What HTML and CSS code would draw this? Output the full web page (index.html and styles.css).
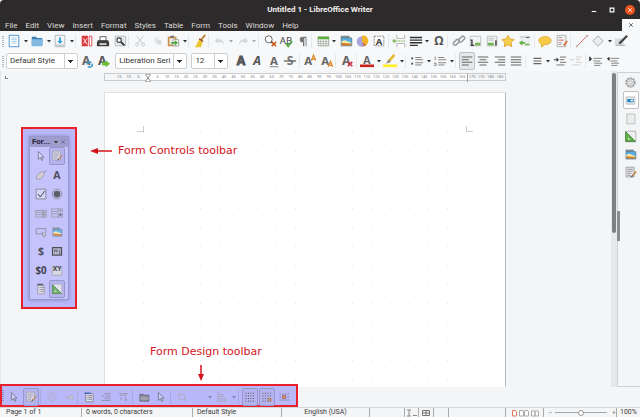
FILE: index.html
```
<!DOCTYPE html>
<html lang="en">
<head>
    <meta charset="UTF-8">
    <title>Untitled 1 - LibreOffice Writer</title>
    <link rel="stylesheet" href="styles.css">
</head>
<body>

<!-- icons -->
<svg class="sprite" aria-hidden="true">
    <symbol id="caret" viewBox="0 0 6 16"><path d="M1 7h4L3 9.500z" fill="#333"/></symbol>
    <symbol id="new" viewBox="0 0 16 16"><path d="M2.500 1.500h11v13h-11z" fill="#fff" stroke="#3b88cf"/><path d="M5 4.500h6M5 6.500h6M5 8.500h6M5 10.500h6" stroke="#9cc6ec"/></symbol>
    <symbol id="open" viewBox="0 0 16 16"><path d="M2 3h5l1 1.500h6V13H2z" fill="#3f7fb5"/><path d="M2 6h13l-1 8H2z" fill="#83b9e0"/></symbol>
    <symbol id="save" viewBox="0 0 16 16"><path d="M2.500 1.500h11v13h-11z" fill="#f4f6f8" stroke="#a9b2b8"/><path d="M7 4h2v4h2l-3 3-3-3h2z" fill="#1f9bd8"/><path d="M3 12h10v2H3z" fill="#c5cbd0"/></symbol>
    <symbol id="pdf" viewBox="0 0 16 16"><path d="M2 2h7v12H2z" fill="#d9363a"/><path d="M10.500 2.500h3v11h-3z" fill="#fff" stroke="#d9363a"/><path d="M4 11l4-6M4 5l4 7" stroke="#fff"/></symbol>
    <symbol id="print" viewBox="0 0 16 16"><path d="M4.500 3h7v5h-7z" fill="#fff" stroke="#555"/><path d="M2 7h12l1 3v4H1v-4z" fill="#3c3c3c"/><path d="M4 10.500h8v2H4z" fill="#ddd"/></symbol>
    <symbol id="preview" viewBox="0 0 16 16"><path d="M2.500 2.500h12v11h-12z" fill="#e6e8ea" stroke="#b5b8ba"/><circle cx="7" cy="7" r="2.500" fill="#fff" stroke="#444" stroke-width="1.300"/><path d="M9 9l4 4" stroke="#333" stroke-width="2"/></symbol>
    <symbol id="cut" viewBox="0 0 16 16"><g fill="none" stroke="#c3c5c8"><path d="M4 2l7 9M12 2l-7 9"/><circle cx="4.500" cy="12" r="1.700"/><circle cx="11.500" cy="12" r="1.700"/></g></symbol>
    <symbol id="copy" viewBox="0 0 16 16"><path d="M5 4h5v6H5z" fill="#e4e6e8"/><path d="M8 7h5v5H8z" fill="#d8dadd"/></symbol>
    <symbol id="paste" viewBox="0 0 16 16"><path d="M2 3h10v11H2z" fill="#c6944f"/><path d="M4 5h6v7H4z" fill="#eee"/><path d="M5 2h4v2H5z" fill="#666"/><path d="M8 6.500h6.500v7H8z" fill="#fff" stroke="#999"/><path d="M6 9h4V7l4 3-4 3v-2H6z" fill="#4da33c"/></symbol>
    <symbol id="brush" viewBox="0 0 16 16"><path d="M14 1l-5 6" stroke="#b98225" stroke-width="2"/><path d="M7 6l4 3-2 6H2c2-2 3-5 5-9z" fill="#e9c62e"/><path d="M7 5.500l4.500 3" stroke="#8c3a20" stroke-width="1.500"/></symbol>
    <symbol id="undo" viewBox="0 0 16 16"><path d="M6 4L2 8l4 3V9c3 0 5 0 6 3 1-4-2-6-6-6z" fill="#d7d9dc"/></symbol>
    <symbol id="redo" viewBox="0 0 16 16"><path d="M10 4l4 4-4 3V9c-3 0-5 0-6 3-1-4 2-6 6-6z" fill="#d7d9dc"/></symbol>
    <symbol id="find" viewBox="0 0 16 16"><circle cx="6.500" cy="6" r="4" fill="#fff" stroke="#555"/><path d="M9 9l2 2" stroke="#444" stroke-width="1.500"/><path d="M10 9l5 5M15 9l-5 5" stroke="#c9581c" stroke-width="1.800"/></symbol>
    <symbol id="para" viewBox="0 0 16 16"><path d="M12 3H7.500a3 3 0 0 0 0 6.500H8V14h1.500V4.500H11V14h1V3z" fill="#777"/></symbol>
    <symbol id="table" viewBox="0 0 16 16"><path d="M2.500 3.500h12v10h-12z" fill="#fff" stroke="#9aa39a"/><path d="M2 3h13v3H2z" fill="#5cae38"/><path d="M2 8.500h13M2 11h13M5.500 6v8M8.500 6v8M11.500 6v8" stroke="#a8b3a6"/></symbol>
    <symbol id="image" viewBox="0 0 16 16"><path d="M2 2h10v3H2z" fill="#7f8b93"/><path d="M2.500 4.500h12v9h-12z" fill="#55b0e6" stroke="#5f7f94"/><path d="M3 8l4-1 7 3v1H3z" fill="#f5e7a5"/><path d="M3 10l11 1v2H3z" fill="#d97e28"/></symbol>
    <symbol id="chart" viewBox="0 0 16 16"><circle cx="8" cy="8.500" r="6" fill="#aaa2da"/><path d="M8 2.500v6l5 4A6 6 0 0 0 8 2z" fill="#f4b326"/><path d="M9 9.500l4 4h-4z" fill="#d66a1e"/></symbol>
    <symbol id="pagebreak" viewBox="0 0 16 16"><path d="M5.500 1v4h9V1M5.500 15v-4h9v4" fill="#fff" stroke="#aaa"/><path d="M4 8h11" stroke="#6fae47" stroke-dasharray="2 1"/><circle cx="2.500" cy="8" r="2" fill="#84b75f"/></symbol>
    <symbol id="field" viewBox="0 0 16 16"><path d="M1 4h14M1 7h14M1 10h14M1 13h9" stroke="#333" stroke-width="1.500"/></symbol>
    <symbol id="link" viewBox="0 0 16 16"><g fill="none" stroke="#979b9e" stroke-width="1.800"><rect x="1" y="7.500" width="8" height="4" rx="2" transform="rotate(-45 5 9.500)"/><rect x="7" y="4" width="8" height="4" rx="2" transform="rotate(-45 11 6)"/></g></symbol>
    <symbol id="footnote" viewBox="0 0 16 16"><path d="M2.500 2.500h12v11h-12z" fill="#f2f3f4" stroke="#b8bbbd"/><path d="M3 7h1.500v6M3 13h4" fill="none" stroke="#333" stroke-width="1.500"/><path d="M8 10h6v3H8z" fill="#72b552"/></symbol>
    <symbol id="endnote" viewBox="0 0 16 16"><path d="M2.500 2.500h11v11h-11z" fill="#f2f3f4" stroke="#b8bbbd"/><path d="M4 5h6M4 7h6" stroke="#bbb"/><path d="M3 10h7v3H3z" fill="#72b552"/><path d="M12.500 7v6" stroke="#333" stroke-width="1.500"/></symbol>
    <symbol id="star" viewBox="0 0 16 16"><path d="M8 1.500l2 4.200 5 .6-3.600 3.300.9 4.900L8 12.200l-4.300 2.300.9-4.900L1 6.300l5-.6z" fill="#f8cf4b" stroke="#d9a52a"/></symbol>
    <symbol id="crossref" viewBox="0 0 16 16"><path d="M2 2h12v3H2z" fill="#d5d8da"/><path d="M4 5h10v9H4z" fill="#eceeef"/><path d="M1 10l4-3v2h3v2H5v2z" fill="#5dab40"/><path d="M8 11h5v2H8z" fill="#79ba5e"/><path d="M9 4h4" stroke="#555"/></symbol>
    <symbol id="comment" viewBox="0 0 16 16"><path d="M8 3c4 0 7 1.500 7 4.500S12 12 8 12l-4 3v-3.500C2 11 1 9 1 7.500 1 4.500 4 3 8 3z" fill="#f7cb45" stroke="#dda72d"/></symbol>
    <symbol id="track" viewBox="0 0 16 16"><path d="M2.500 1.500h10v13h-10z" fill="#f2f2f2" stroke="#a9abad"/><path d="M4 4h4M4 10h4M4 12h3" stroke="#999"/><path d="M4 7h6" stroke="#d05a4a"/><path d="M14 8l-4 5" stroke="#d8743a" stroke-width="2"/></symbol>
    <symbol id="line" viewBox="0 0 16 16"><path d="M2 14L14 2" stroke="#d0605c"/><path d="M1 13h2v2H1zM13 1h2v2h-2z" fill="#c9a5a5"/></symbol>
    <symbol id="shape" viewBox="0 0 16 16"><path d="M8 2l6 6-6 6-6-6z" fill="#e9ebec" stroke="#a2a5a7"/></symbol>
    <symbol id="draw" viewBox="0 0 16 16"><path d="M1 5h10v8H1z" fill="#d9dcde"/><path d="M2 13h11" stroke="#aaa"/><path d="M15 2L6 11" stroke="#444" stroke-width="2.500"/></symbol>

    <symbol id="bullets" viewBox="0 0 16 16"><path d="M6 4h7M6 6.500h9M6 10h9M6 12.500h7" stroke="#777"/><circle cx="2.500" cy="5" r="1.200" fill="#555"/><circle cx="2.500" cy="11" r="1.200" fill="#555"/></symbol>
    <symbol id="numbers" viewBox="0 0 16 16"><path d="M6 4h7M6 6.500h9M6 10h9M6 12.500h7" stroke="#777"/><path d="M2.500 3v4M1 10.500h2.500V13H1" fill="none" stroke="#777"/></symbol>
    <symbol id="left" viewBox="0 0 16 16"><path d="M2 3.500h12M2 6.500h8M2 9.500h12M2 12.500h8" stroke="#666" stroke-width="1.200"/></symbol>
    <symbol id="center" viewBox="0 0 16 16"><path d="M2 3.500h12M4 6.500h8M2 9.500h12M4 12.500h8" stroke="#666" stroke-width="1.200"/></symbol>
    <symbol id="right" viewBox="0 0 16 16"><path d="M2 3.500h12M6 6.500h8M2 9.500h12M6 12.500h8" stroke="#666" stroke-width="1.200"/></symbol>
    <symbol id="justify" viewBox="0 0 16 16"><path d="M2 3.500h12M2 6.500h12M2 9.500h12M2 12.500h12" stroke="#666" stroke-width="1.200"/></symbol>
    <symbol id="spacing" viewBox="0 0 16 16"><path d="M4 5h9M4 8h9M4 11h9" stroke="#666" stroke-width="1.200"/></symbol>
    <symbol id="indent" viewBox="0 0 16 16"><path d="M8 3.500h7M8 6.500h5M8 9.500h7M4 12.500h9" stroke="#666"/><path d="M1 6h3V4l3 2.500L4 9V7H1z" fill="#444"/></symbol>
    <symbol id="outdent" viewBox="0 0 16 16"><path d="M8 3.500h7M8 6.500h5M8 9.500h7M4 12.500h9M1 6.500h5" stroke="#ccc"/></symbol>
    <symbol id="para-more" viewBox="0 0 16 16"><path d="M5 5h10M5 8h8M6 10.500h9M6 13h7" stroke="#777"/><path d="M1 3v5M3 5l-2 2" stroke="#222" stroke-width="1.500"/></symbol>
    <symbol id="para-less" viewBox="0 0 16 16"><path d="M5 5h10M5 8h8M6 10.500h9M6 13h7" stroke="#777"/><path d="M4 3v5L1 5.500z" fill="#222"/></symbol>

    <symbol id="arrow" viewBox="0 0 16 16"><path d="M4.500 2v10.500l2.500-2.500 2 4 1.600-.8-2-3.700H12z" fill="#fff" fill-opacity=".4" stroke="#555"/></symbol>
    <symbol id="design" viewBox="0 0 16 16"><path d="M2.500 1.500h10v12h-10z" fill="#e9e9ee" stroke="#999"/><path d="M4 4h7M4 6.500h7M4 9h5M4 11.500h4" stroke="#888"/><path d="M15 7l-5 5" stroke="#c28748" stroke-width="2"/><path d="M10 11l-2 3 3-1z" fill="#444"/></symbol>
    <symbol id="tag" viewBox="0 0 16 16"><path d="M9 3l4 4-6 7-5-1V9z" fill="#d9cfd0" stroke="#8c8591"/><path d="M11 5l4-3" stroke="#666"/></symbol>
    <symbol id="check" viewBox="0 0 16 16"><path d="M1.500 1.500h13v13h-13z" fill="#fff" fill-opacity=".4" stroke="#666"/><path d="M4 8l3 4 6-8" fill="none" stroke="#222" stroke-width="1.300"/></symbol>
    <symbol id="radio" viewBox="0 0 16 16"><circle cx="8" cy="8" r="6.500" fill="none" stroke="#777"/><circle cx="8" cy="8" r="4.500" fill="#444"/></symbol>
    <symbol id="listbox" viewBox="0 0 16 16"><path d="M1 4.500h14v9H1zM10 4.500v9M2 7h7M2 10h7" fill="none" stroke="#888"/><path d="M11 6.500h2.500v2H11zM11 10h2.500v2H11z" fill="none" stroke="#888"/></symbol>
    <symbol id="combo" viewBox="0 0 16 16"><path d="M1 2.500h14v11H1zM9.500 2v12M2 6h7M2 9h7" fill="none" stroke="#888"/><path d="M11 4h3l-1.500 2zM11 8.500h3v3h-3z" fill="#555"/></symbol>
    <symbol id="pushbtn" viewBox="0 0 16 16"><path d="M10 10.500H1.500v-7h13v6" fill="none" stroke="#777"/><path d="M10 8v5h2v2l3-3-3-2z" fill="#ddd" stroke="#777"/></symbol>
    <symbol id="date" viewBox="0 0 16 16"><path d="M2 3.500h12v10H2z" fill="#b5b5c5" stroke="#333" stroke-width="1.600"/><path d="M4 7h5M5 7v3M8 7v3M11.500 7v5" stroke="#333"/></symbol>
    <symbol id="more" viewBox="0 0 16 16"><path d="M3.500 3.500h9v11h-9z" fill="#e4e4ea" stroke="#888"/><path d="M3 2h8" stroke="#444" stroke-width="2"/><path d="M5 6h1M7 6h5M5 8.500h1M7 8.500h5M5 11h1M7 11h5" stroke="#777"/></symbol>
    <symbol id="wizard" viewBox="0 0 16 16"><path d="M2.500 1.500h12v13h-12z" fill="#eee" stroke="#aaa"/><path d="M2 2v12h12z" fill="#62b04b" stroke="#3b7d34"/><path d="M5 9v3h3z" fill="#d5e6d0"/></symbol>

    <symbol id="ring" viewBox="0 0 16 16"><circle cx="8" cy="8" r="5.500" fill="none" stroke="#aaa"/><circle cx="8" cy="8" r="2.500" fill="none" stroke="#aaa"/></symbol>
    <symbol id="form-off" viewBox="0 0 16 16"><path d="M3 7h4M3 10h4" stroke="#aaa"/><path d="M8.500 6.500h5v4h-5z" fill="#ccc" stroke="#aaa"/></symbol>
    <symbol id="navigator" viewBox="0 0 16 16"><path d="M3.500 3.500h10v11h-10z" fill="#e8e8f0" stroke="#666"/><path d="M2 2h8v2H2z" fill="#235a9b"/><path d="M5 6h1M7 6h5M5 8.500h1M7 8.500h5M5 11h1M7 11h5" stroke="#555"/></symbol>
    <symbol id="addfield" viewBox="0 0 16 16"><path d="M6 3.500h8M2 6.500h4M8 6.500h6M6 9.500h8M2 12.500h12" stroke="#777"/></symbol>
    <symbol id="order" viewBox="0 0 16 16"><path d="M2 3.500h13M4 5.500h6M11.500 4v9l-2-2M11.500 13l2-2M5.500 8v4" fill="none" stroke="#888"/></symbol>
    <symbol id="folder" viewBox="0 0 16 16"><path d="M2.500 4.500h5l1 1h6v8h-12z" fill="#777" stroke="#444"/><path d="M3 7.500h11v5H3z" fill="#9a9a9a"/></symbol>
    <symbol id="crop" viewBox="0 0 16 16"><path d="M4.500 2v9.500H14M2 4.500h9.500V14" fill="none" stroke="#aaa"/></symbol>
    <symbol id="align" viewBox="0 0 16 16"><path d="M2.500 1v14M3 4.500h6v3H3M3 10.500h10v3H3" fill="none" stroke="#999"/></symbol>
    <symbol id="dots" viewBox="0 0 16 16"><path d="M2 3h13M2 6.500h13M2 10h13M2 13.500h13" stroke="#333" stroke-width="1.300" stroke-dasharray="1.300 2"/></symbol>
    <symbol id="snap" viewBox="0 0 16 16"><path d="M2 3h13M2 6.500h13M2 10h13M2 13.500h13" stroke="#444" stroke-width="1.300" stroke-dasharray="1.300 2"/><path d="M9 9h5v5H9z" fill="#b98357"/></symbol>
    <symbol id="guides" viewBox="0 0 16 16"><path d="M2 4h13M2 8h13M2 12h13" stroke="#555" stroke-dasharray="2 1.500"/><path d="M5.500 5.500h5v5h-5z" fill="#b5532c"/><path d="M7 7h2v2H7z" fill="#f3c54a"/></symbol>

    <symbol id="gear" viewBox="0 0 16 16"><circle cx="8" cy="8" r="5.500" fill="none" stroke="#a3a6a8" stroke-width="2" stroke-dasharray="2.500 1"/><circle cx="8" cy="8" r="4.500" fill="#eee" stroke="#999"/><circle cx="8" cy="8" r="2" fill="#fff" stroke="#999"/></symbol>
    <symbol id="toggle" viewBox="0 0 16 16"><path d="M2.500 3.500h11v9h-11z" fill="#e5e8ea" stroke="#b6babd"/><rect x="4" y="6" width="8" height="4" rx="1" fill="#2382c4"/><path d="M8 7h3v2H8z" fill="#fff"/></symbol>
    <symbol id="page" viewBox="0 0 16 16"><path d="M3.500 2.500h10v12h-10z" fill="#eceeee" stroke="#b3b5b6"/></symbol>
    <symbol id="minus" viewBox="0 0 16 16"><path d="M2 12h12" stroke="#fff" stroke-width="3"/></symbol>
    <symbol id="max" viewBox="0 0 16 16"><path d="M3 3h10v10H3z" fill="none" stroke="#fff" stroke-width="3"/></symbol>
    <symbol id="x" viewBox="0 0 16 16"><path d="M3 3l10 10M13 3L3 13" stroke="currentColor" stroke-width="2"/></symbol>
    <symbol id="hourglass" viewBox="0 0 6 8"><path d="M1 0h4v1.500L3 4l2 2.500V8H1V6.500L3 4 1 1.500z" fill="#fff" stroke="#888"/></symbol>
</svg>

<header class="titlebar">
    <h1>Untitled 1 - LibreOffice Writer</h1>
    <div class="window-btns">
        <button aria-label="Minimize"><svg><use href="#minus"/></svg></button>
        <button aria-label="Maximize"><svg><use href="#max"/></svg></button>
        <button class="close" aria-label="Close"><svg><use href="#x"/></svg></button>
    </div>
    <nav class="menu">
        <button>File</button>
        <button>Edit</button>
        <button>View</button>
        <button>Insert</button>
        <button>Format</button>
        <button>Styles</button>
        <button>Table</button>
        <button>Form</button>
        <button>Tools</button>
        <button>Window</button>
        <button>Help</button>
        <button class="close-doc" aria-label="Close document"><svg><use href="#x"/></svg></button>
    </nav>
</header>

<div class="toolbar standard">
    <button class="tool" aria-label="New"><svg><use href="#new"/></svg></button>
    <button class="drop" aria-label="New menu"><svg><use href="#caret"/></svg></button>
    <button class="tool" aria-label="Open"><svg><use href="#open"/></svg></button>
    <button class="drop" aria-label="Open menu"><svg><use href="#caret"/></svg></button>
    <button class="tool" aria-label="Save"><svg><use href="#save"/></svg></button>
    <button class="drop" aria-label="Save menu"><svg><use href="#caret"/></svg></button>
    <i class="sep"></i>
    <button class="tool" aria-label="Export as PDF"><svg><use href="#pdf"/></svg></button>
    <button class="tool" aria-label="Print"><svg><use href="#print"/></svg></button>
    <button class="tool" aria-label="Print preview"><svg><use href="#preview"/></svg></button>
    <i class="sep"></i>
    <button class="tool" aria-label="Cut"><svg><use href="#cut"/></svg></button>
    <button class="tool" aria-label="Copy"><svg><use href="#copy"/></svg></button>
    <button class="tool" aria-label="Paste"><svg><use href="#paste"/></svg></button>
    <button class="drop" aria-label="Paste menu"><svg><use href="#caret"/></svg></button>
    <i class="sep"></i>
    <button class="tool" aria-label="Clone formatting"><svg><use href="#brush"/></svg></button>
    <i class="sep"></i>
    <button class="tool" aria-label="Undo"><svg><use href="#undo"/></svg></button>
    <button class="drop off" aria-label="Undo menu"><svg><use href="#caret"/></svg></button>
    <button class="tool" aria-label="Redo"><svg><use href="#redo"/></svg></button>
    <button class="drop off" aria-label="Redo menu"><svg><use href="#caret"/></svg></button>
    <i class="sep"></i>
    <button class="tool" aria-label="Find and replace"><svg><use href="#find"/></svg></button>
    <button class="tool" aria-label="Spelling"><svg viewBox="0 0 16 16"><text x="8" y="11" text-anchor="middle" font-size="11" fill="#444">AB</text><path d="M8 11l2.500 3L15 8" fill="none" stroke="#4fa83d" stroke-width="2"/></svg></button>
    <button class="tool" aria-label="Formatting marks"><svg><use href="#para"/></svg></button>
    <i class="sep"></i>
    <button class="tool" aria-label="Table"><svg><use href="#table"/></svg></button>
    <button class="drop" aria-label="Table menu"><svg><use href="#caret"/></svg></button>
    <button class="tool" aria-label="Image"><svg><use href="#image"/></svg></button>
    <button class="tool" aria-label="Chart"><svg><use href="#chart"/></svg></button>
    <button class="tool" aria-label="Text box"><svg viewBox="0 0 16 16"><path d="M2.500 2.500h11v11h-11z" fill="#fff" stroke="#777" stroke-dasharray="2 1"/><text x="8" y="12" text-anchor="middle" font-size="11" font-weight="700" fill="#444">A</text></svg></button>
    <i class="sep"></i>
    <button class="tool" aria-label="Page break"><svg><use href="#pagebreak"/></svg></button>
    <button class="tool" aria-label="Field"><svg><use href="#field"/></svg></button>
    <button class="drop" aria-label="Field menu"><svg><use href="#caret"/></svg></button>
    <button class="tool" aria-label="Special character"><svg viewBox="0 0 16 16"><text x="8" y="13" text-anchor="middle" font-size="14" font-weight="700" fill="#555">Ω</text></svg></button>
    <i class="sep"></i>
    <button class="tool" aria-label="Hyperlink"><svg><use href="#link"/></svg></button>
    <button class="tool" aria-label="Footnote"><svg><use href="#footnote"/></svg></button>
    <button class="tool" aria-label="Endnote"><svg><use href="#endnote"/></svg></button>
    <button class="tool" aria-label="Bookmark"><svg><use href="#star"/></svg></button>
    <button class="tool" aria-label="Cross-reference"><svg><use href="#crossref"/></svg></button>
    <i class="sep"></i>
    <button class="tool" aria-label="Comment"><svg><use href="#comment"/></svg></button>
    <button class="tool" aria-label="Track changes"><svg><use href="#track"/></svg></button>
    <i class="sep"></i>
    <button class="tool" aria-label="Line"><svg><use href="#line"/></svg></button>
    <button class="tool" aria-label="Shapes"><svg><use href="#shape"/></svg></button>
    <button class="drop" aria-label="Shapes menu"><svg><use href="#caret"/></svg></button>
    <button class="tool" aria-label="Draw functions"><svg><use href="#draw"/></svg></button>
</div>

<div class="toolbar formatting">
    <select class="wide" aria-label="Paragraph style"><option>Default Style</option></select>
    <button class="tool" aria-label="Update style"><svg viewBox="0 0 16 16"><text x="7" y="13" text-anchor="middle" font-size="14" font-weight="700" fill="#666">A</text><path d="M8 12a3 3 0 0 1 5-2M14 11a3 3 0 0 1-5 3" fill="none" stroke="#3e9bc4" stroke-width="1.800"/></svg></button>
    <button class="tool" aria-label="New style"><svg viewBox="0 0 16 16"><text x="7" y="13" text-anchor="middle" font-size="14" font-weight="700" fill="#555">A</text><path d="M7 9h4V7l5 4-5 4v-2H7z" fill="#6bbd35"/></svg></button>
    <i class="sep blank"></i>
    <select class="wide" aria-label="Font name"><option>Liberation Seri</option></select>
    <i class="sep blank"></i>
    <select class="narrow" aria-label="Font size"><option>12</option></select>
    <i class="sep blank"></i>
    <button class="tool" aria-label="Bold"><svg viewBox="0 0 16 16"><text x="8" y="13" text-anchor="middle" font-size="14" font-weight="700" fill="#555" stroke="#555">A</text></svg></button>
    <button class="tool" aria-label="Italic"><svg viewBox="0 0 16 16"><text x="8" y="13" text-anchor="middle" font-size="14" font-weight="700" font-style="italic" fill="#555">A</text></svg></button>
    <button class="tool" aria-label="Underline"><svg viewBox="0 0 16 16"><text x="8" y="12" text-anchor="middle" font-size="13" font-weight="700" fill="#666">A</text><path d="M3 14.500h10" stroke="#777"/></svg></button>
    <button class="tool" aria-label="Strikethrough"><svg viewBox="0 0 16 16"><text x="8" y="13" text-anchor="middle" font-size="14" font-weight="700" fill="#777">S</text><path d="M1 8h14" stroke="#666" stroke-width="1.500"/></svg></button>
    <i class="sep"></i>
    <button class="tool" aria-label="Superscript"><svg viewBox="0 0 16 16"><text x="6" y="13" text-anchor="middle" font-size="13" font-weight="700" fill="#666">A</text><path d="M9.500 7.500l2.500-6 2.500 6M10.500 6h3" fill="none" stroke="#e08a2c" stroke-width="1.500"/></svg></button>
    <button class="tool" aria-label="Subscript"><svg viewBox="0 0 16 16"><text x="6" y="12" text-anchor="middle" font-size="13" font-weight="700" fill="#666">A</text><path d="M9.500 14.500l2.500-6 2.500 6M10.500 13h3" fill="none" stroke="#e08a2c" stroke-width="1.500"/></svg></button>
    <i class="sep"></i>
    <button class="tool" aria-label="Clear formatting"><svg viewBox="0 0 16 16"><text x="7" y="13" text-anchor="middle" font-size="14" font-weight="700" fill="#666">A</text><path d="M9 9l5 5M14 9l-5 5" stroke="#c8384a" stroke-width="2"/></svg></button>
    <i class="sep"></i>
    <button class="tool" aria-label="Font color"><svg viewBox="0 0 16 16"><text x="8" y="11" text-anchor="middle" font-size="12" font-weight="700" fill="#666">A</text><path d="M0 12h16v3H0z" fill="#c9211e"/></svg></button>
    <button class="drop" aria-label="Font color menu"><svg><use href="#caret"/></svg></button>
    <button class="tool" aria-label="Highlighting"><svg viewBox="0 0 16 16"><path d="M13 1L6 9" stroke="#e8b92e" stroke-width="3"/><path d="M7 6l2 3-6 2z" fill="#888"/><path d="M0 12h16v3H0z" fill="#ffee22"/></svg></button>
    <button class="drop" aria-label="Highlighting menu"><svg><use href="#caret"/></svg></button>
    <i class="sep"></i>
    <button class="tool" aria-label="Bullets"><svg><use href="#bullets"/></svg></button>
    <button class="drop" aria-label="Bullets menu"><svg><use href="#caret"/></svg></button>
    <button class="tool" aria-label="Numbering"><svg><use href="#numbers"/></svg></button>
    <button class="drop" aria-label="Numbering menu"><svg><use href="#caret"/></svg></button>
    <i class="sep"></i>
    <button class="tool on" aria-label="Align left"><svg><use href="#left"/></svg></button>
    <button class="tool" aria-label="Center"><svg><use href="#center"/></svg></button>
    <button class="tool" aria-label="Align right"><svg><use href="#right"/></svg></button>
    <button class="tool" aria-label="Justified"><svg><use href="#justify"/></svg></button>
    <i class="sep"></i>
    <button class="tool" aria-label="Line spacing"><svg><use href="#spacing"/></svg></button>
    <button class="drop" aria-label="Line spacing menu"><svg><use href="#caret"/></svg></button>
    <button class="tool" aria-label="Increase indent"><svg><use href="#indent"/></svg></button>
    <button class="tool" aria-label="Decrease indent"><svg><use href="#outdent"/></svg></button>
    <i class="sep"></i>
    <button class="tool" aria-label="Increase paragraph spacing"><svg><use href="#para-more"/></svg></button>
    <button class="tool" aria-label="Decrease paragraph spacing"><svg><use href="#para-less"/></svg></button>
</div>

<main class="work">
    <div class="desk">
        <i class="tab-mark"></i>
        <div class="ruler">
            <span></span><span>15</span><span>10</span><span>5</span><span class="mark"><svg><use href="#hourglass"/></svg></span><span>5</span><span>10</span><span>15</span><span>20</span><span>25</span><span>30</span><span>35</span><span>40</span><span>45</span><span>50</span><span>55</span><span>60</span><span>65</span><span>70</span><span>75</span><span>80</span><span>85</span><span>90</span><span>95</span><span>100</span><span>105</span><span>110</span><span>115</span><span>120</span><span>125</span><span>130</span><span>135</span><span>140</span><span>145</span><span>150</span><span>155</span><span>160</span><span>165</span><span class="end">170</span><span>175</span><span>180</span><span>185</span>
        </div>
        <article class="sheet">
            <div class="text-area"></div>
        </article>

        <!-- floating form controls -->
        <section class="float-frame">
            <div class="float-bar">
                <header>
                    <b>For...</b>
                    <svg class="menu-caret"><use href="#caret"/></svg>
                    <button aria-label="Close toolbar"><svg><use href="#x"/></svg></button>
                </header>
                <div class="controls">
                    <button class="tool" aria-label="Select"><svg><use href="#arrow"/></svg></button>
                    <button class="tool on" aria-label="Design mode"><svg><use href="#design"/></svg></button>
                    <button class="tool" aria-label="Control properties"><svg><use href="#tag"/></svg></button>
                    <button class="tool" aria-label="Label"><svg viewBox="0 0 16 16"><text x="8" y="13" text-anchor="middle" font-size="14" font-weight="700" fill="#333">A</text></svg></button>
                    <button class="tool" aria-label="Check box"><svg><use href="#check"/></svg></button>
                    <button class="tool" aria-label="Option button"><svg><use href="#radio"/></svg></button>
                    <button class="tool" aria-label="List box"><svg><use href="#listbox"/></svg></button>
                    <button class="tool" aria-label="Combo box"><svg><use href="#combo"/></svg></button>
                    <button class="tool" aria-label="Push button"><svg><use href="#pushbtn"/></svg></button>
                    <button class="tool" aria-label="Image button"><svg><use href="#image"/></svg></button>
                    <button class="tool" aria-label="Currency field"><svg viewBox="0 0 16 16"><text x="8" y="13" text-anchor="middle" font-size="14" font-weight="700" fill="#333">$</text></svg></button>
                    <button class="tool" aria-label="Date field"><svg><use href="#date"/></svg></button>
                    <button class="tool" aria-label="Formatted field"><svg viewBox="0 0 16 16"><text x="8" y="13" text-anchor="middle" font-size="13" font-weight="700" fill="#222">$0</text></svg></button>
                    <button class="tool" aria-label="Group box"><svg viewBox="0 0 16 16"><rect x="1.500" y="4" width="13" height="11" rx="1" fill="#ddd" stroke="#999"/><text x="8" y="9" text-anchor="middle" font-size="9" font-weight="700" fill="#222">XY</text></svg></button>
                    <button class="tool" aria-label="More controls"><svg><use href="#more"/></svg></button>
                    <button class="tool on" aria-label="Wizards"><svg><use href="#wizard"/></svg></button>
                </div>
            </div>
        </section>

        <p class="note note-controls">
            <svg viewBox="0 0 22 8"><path d="M4 4h18" stroke="#d4141c" stroke-width="1.500"/><path d="M0 4l8-3v6z" fill="#d4141c"/></svg>
            Form Controls toolbar
        </p>
        <p class="note note-design">
            Form Design toolbar
            <svg viewBox="0 0 8 16"><path d="M4 0v12" stroke="#d4141c" stroke-width="1.500"/><path d="M4 16l3-7H1z" fill="#d4141c"/></svg>
        </p>
    </div>
    <div class="scroll"><i></i></div>
    <aside class="sidebar">
        <button class="tool" aria-label="Sidebar settings"><svg><use href="#gear"/></svg></button>
        <button class="tool on" aria-label="Properties"><svg><use href="#toggle"/></svg></button>
        <button class="tool" aria-label="Page"><svg><use href="#page"/></svg></button>
        <button class="tool" aria-label="Styles"><svg><use href="#wizard"/></svg></button>
        <button class="tool" aria-label="Gallery"><svg><use href="#image"/></svg></button>
        <button class="tool" aria-label="Navigator"><svg><use href="#design"/></svg></button>
        <i class="handle"></i>
    </aside>
</main>

<div class="form-row">
    <div class="form-bar">
        <button class="tool" aria-label="Select"><svg><use href="#arrow"/></svg></button>
        <button class="tool on" aria-label="Design mode"><svg><use href="#design"/></svg></button>
        <i class="sep"></i>
        <button class="tool" aria-label="Control"><svg><use href="#ring"/></svg></button>
        <button class="tool" aria-label="Form"><svg><use href="#form-off"/></svg></button>
        <i class="sep"></i>
        <button class="tool" aria-label="Form navigator"><svg><use href="#navigator"/></svg></button>
        <button class="tool" aria-label="Add field"><svg><use href="#addfield"/></svg></button>
        <button class="tool" aria-label="Activation order"><svg><use href="#order"/></svg></button>
        <i class="sep"></i>
        <button class="tool" aria-label="Open in design mode"><svg><use href="#folder"/></svg></button>
        <button class="tool" aria-label="Automatic focus"><svg><use href="#arrow"/></svg></button>
        <i class="sep"></i>
        <button class="tool" aria-label="Position and size"><svg><use href="#crop"/></svg></button>
        <button class="tool" aria-label="Anchor"></button>
        <button class="drop off" aria-label="Anchor menu"><svg><use href="#caret"/></svg></button>
        <button class="tool" aria-label="Align"><svg><use href="#align"/></svg></button>
        <button class="drop off" aria-label="Align menu"><svg><use href="#caret"/></svg></button>
        <i class="sep"></i>
        <button class="tool on" aria-label="Display grid"><svg><use href="#dots"/></svg></button>
        <button class="tool on" aria-label="Snap to grid"><svg><use href="#snap"/></svg></button>
        <button class="tool" aria-label="Helplines"><svg><use href="#guides"/></svg></button>
    </div>
</div>

<footer class="status">
    <span>Page 1 of 1</span>
    <span>0 words, 0 characters</span>
    <span>Default Style</span>
    <span class="mid">English (USA)</span>
    <span></span>
    <span class="mid"><svg viewBox="0 0 12 8"><path d="M1 1h4M3 1v6M1 7h4M7 6.500h4" stroke="#888" fill="none"/></svg></span>
    <span class="mid"><svg viewBox="0 0 12 8"><path d="M2.500 1.500h7v5h-7zM6 1v6M3 4h6" stroke="#777" fill="none"/></svg></span>
    <span></span>
    <span></span>
    <span class="mid views">
        <svg viewBox="0 0 28 8"><path d="M1.500 1.500h3l1 1.500v4h-4z" stroke="#e07a62" fill="#fff"/><path d="M8.500 1.500h3l1 1.500v4h-4zM13.500 1.500h3l1 1.500v4h-4zM24 2v5h-3.500V2zM24 2v5h3.500V2z" stroke="#aaa" fill="#fff"/></svg>
    </span>
    <span class="zoom">
        <button aria-label="Zoom out">−</button>
        <input type="range" aria-label="Zoom" min="0" max="100" value="50">
        <button aria-label="Zoom in">+</button>
    </span>
    <span>100%</span>
</footer>

</body>
</html>
```
FILE: styles.css
```
* {
    margin: 0;
    padding: 0;
    box-sizing: border-box;
}

body {
    display: flex;
    flex-direction: column;
    min-height: 100vh;
    background: #f4f5f7;
    font: 8px/10px Roboto, "Noto Sans", sans-serif;
    color: #3c3c3c;
}

button {
    border: 0;
    background: none;
    font: inherit;
    color: inherit;
}

svg {
    display: block;
    overflow: visible;
    font-family: "Noto Sans", sans-serif;
}

.sprite {
    position: absolute;
    width: 0;
    height: 0;
}

/* title and menu */
.titlebar {
    position: relative;
    height: 31px;
    padding-top: 4px;
    background: #2c2a2a;
    border-radius: 4px 4px 0 0;
    color: #dedbd8;
}

.titlebar h1 {
    font-size: 8px;
    line-height: 12px;
    text-align: center;
    color: #f2f1f0;
}

.window-btns {
    position: absolute;
    top: 5px;
    right: 5px;
    display: flex;
    align-items: center;
    gap: 8px;
}

.window-btns button {
    width: 10px;
    height: 10px;
    padding: 2px;
    border-radius: 5px;
}

.window-btns svg {
    width: 6px;
    height: 6px;
}

.window-btns .close {
    background: #e95420;
    color: #fff;
}

.menu {
    display: flex;
    align-items: center;
    gap: 8px;
    height: 15px;
    padding-left: 5px;
}

.menu button {
    position: relative;
    top: 2px;
}

.menu .close-doc {
    top: 0;
    align-self: flex-end;
    display: flex;
    align-items: center;
    justify-content: center;
    width: 18px;
    height: 12px;
    margin-left: auto;
    background: #f8f9fa;
    color: #444;
}

.close-doc svg {
    width: 6px;
    height: 6px;
}

/* toolbars */
.toolbar {
    display: flex;
    align-items: center;
    justify-content: space-between;
    height: 20px;
    padding: 0 10px 0 6px;
    background: repeating-linear-gradient(#b5b7b9 0 1px, transparent 1px 2px) 2px center / 2px 11px no-repeat, #f7f8fa;
}

.formatting {
    padding-right: 19px;
}

.tool {
    display: flex;
    align-items: center;
    justify-content: center;
    width: 16px;
    height: 18px;
    flex: none;
}

.tool svg {
    width: 14px;
    height: 14px;
    flex: none;
}

.tool.on {
    border: 1px solid #bfc2c5;
    border-radius: 2px;
    background: #e6e8ea;
}

.drop {
    width: 6px;
    height: 16px;
    flex: none;
}

.drop svg {
    width: 6px;
    height: 16px;
}

.drop.off {
    opacity: .4;
}

.sep {
    width: 3px;
    height: 14px;
    border-left: 1px solid #e6e8ea;
}

.sep.blank {
    border: 0;
}

select {
    appearance: none;
    height: 16px;
    padding-left: 3px;
    border: 1px solid #ccced0;
    border-radius: 2px;
    font: inherit;
    color: #333;
    background:
        linear-gradient(#333, #333) right 4px top 6px / 5px 1px no-repeat,
        linear-gradient(#333, #333) right 5px top 7px / 3px 1px no-repeat,
        linear-gradient(#333, #333) right 6px top 8px / 1px 1px no-repeat,
        linear-gradient(#ccced0, #ccced0) right 12px top 0 / 1px 100% no-repeat,
        #fff;
}

.wide {
    width: 72px;
}

.narrow {
    width: 37px;
}

/* document */
.work {
    flex: 1;
    display: flex;
    border-left: 1px solid #e4e6e8;
}

.desk {
    position: relative;
    flex: 1;
    display: flex;
    flex-direction: column;
    padding: 2px 105px 0 103px;
}

.tab-mark {
    position: absolute;
    top: 5px;
    left: 4px;
    width: 3px;
    height: 3px;
    border-left: 1px solid #888;
    border-bottom: 1px solid #888;
}

.ruler {
    display: grid;
    grid-template-columns: repeat(42, 1fr);
    height: 8px;
    border: 1px solid #c9cbcd;
    background: linear-gradient(#fff, #fff) 38px 0 / 326px 8px no-repeat;
    font-size: 4px;
    line-height: 6px;
    color: #808284;
}

.ruler span {
    display: flex;
    justify-content: center;
}

.ruler .end {
    border-left: 1px solid #999;
}

.mark svg {
    width: 6px;
    height: 8px;
}

.sheet {
    flex: 1;
    margin-top: 11px;
    padding: 33px 32px 0 32px;
    border: 1px solid #dfe1e3;
    border-bottom: 0;
    border-right-color: #b6b8ba;
    background: #fff;
}

.text-area {
    height: 100%;
    background:
        linear-gradient(#ccc, #ccc) 0 5px / 7px 1px no-repeat,
        linear-gradient(#ccc, #ccc) 6px 0 / 1px 6px no-repeat,
        linear-gradient(#ccc, #ccc) right 0 top 5px / 7px 1px no-repeat,
        linear-gradient(#ccc, #ccc) right 6px top 0 / 1px 6px no-repeat,
        linear-gradient(#fff, #fff) right / 8px 100% no-repeat,
        linear-gradient(#fff, #fff) left / 6px 100% no-repeat,
        conic-gradient(from 270deg at 1px 1px, #e3e3e3 90deg, transparent 0) 6px 6px / 19px 19px;
}

.scroll {
    width: 6px;
    padding: 2px 1px 0 1px;
    background: #e6e8ea;
}

.scroll i {
    display: block;
    height: 160px;
    border-radius: 2px;
    background: #7d7f81;
}

.sidebar {
    position: relative;
    display: flex;
    flex-direction: column;
    align-items: center;
    width: 23px;
    margin-top: 1px;
    padding-left: 3px;
    border: 1px solid #cfd1d3;
    border-right: 0;
}

.sidebar svg {
    width: 13px;
    height: 13px;
}

.sidebar .tool.on {
    background: #fff;
}

.handle {
    position: absolute;
    top: 138px;
    left: -1px;
    width: 3px;
    height: 30px;
    background: #8a8c8e;
}

/* marked areas */
.float-frame {
    position: absolute;
    top: 56px;
    left: 20px;
    padding: 7px 6px;
    border: 2px solid #e8202c;
    background: #b9b8fb;
}

.float-bar {
    width: 40px;
    padding-bottom: 1px;
    border: 1px solid #9897cc;
    background: #c4c3fb;
    box-shadow: 0 0 4px #8a89c0;
}

.float-bar header {
    display: flex;
    align-items: center;
    height: 10px;
    padding: 0 2px;
    background: #9d9ccd;
    color: #22223a;
}

.menu-caret {
    width: 8px;
    height: 16px;
    margin-left: auto;
}

.float-bar header svg {
    flex: none;
}

.float-bar header button svg {
    width: 6px;
    height: 6px;
    color: #666694;
}

.controls {
    display: grid;
    grid-template-columns: 16px 16px;
    justify-content: center;
    row-gap: 1px;
}

.float-bar .tool.on,
.form-bar .tool.on {
    border-color: #9695cc;
    background: #b4b3f0;
}

.controls svg,
.form-bar .tool svg {
    width: 12px;
    height: 12px;
    opacity: .8;
}

.note {
    position: absolute;
    display: flex;
    align-items: center;
    font: 11px/14px "DejaVu Sans", sans-serif;
    color: #d4141c;
    white-space: nowrap;
}

.note-controls {
    top: 73px;
    left: 89px;
    gap: 6px;
}

.note-controls svg {
    width: 22px;
    height: 8px;
}

.note-design {
    bottom: 6px;
    left: 149px;
    flex-direction: column;
    align-items: flex-start;
    gap: 6px;
}

.note-design svg {
    width: 8px;
    height: 16px;
    margin-left: 47px;
}

.form-row {
    height: 20px;
}

.form-bar {
    position: relative;
    display: flex;
    align-items: center;
    justify-content: space-between;
    width: 298px;
    height: 23px;
    margin-top: -3px;
    padding: 2px 4px 0 4px;
    border: 2px solid #e8202c;
    background: repeating-linear-gradient(#8f8ec4 0 1px, transparent 1px 2px) 0 center / 2px 11px no-repeat, #b9b8fb;
}

.form-bar .sep {
    border-color: #a9a8e0;
}

/* status bar */
.status {
    display: grid;
    grid-template-columns:
        minmax(0, 81fr) minmax(0, 111fr) minmax(0, 89fr) minmax(0, 88fr)
        minmax(0, 35fr) minmax(0, 14fr) minmax(0, 15fr) minmax(0, 15fr)
        minmax(0, 57fr) minmax(0, 38fr) minmax(0, 73fr) minmax(0, 24fr);
    align-items: center;
    height: 10px;
    border-top: 1px solid #d5d7d9;
    font-size: 7px;
    line-height: 9px;
    white-space: nowrap;
}

.status > span {
    height: 9px;
    padding-left: 4px;
    border-left: 1px solid #a9abad;
}

.status > span:first-child {
    padding-left: 6px;
    border-left: 0;
}

.status > span:last-child {
    padding-left: 3px;
}

.status .mid {
    display: flex;
    align-items: center;
    justify-content: center;
    padding: 0;
}

.mid svg {
    width: 12px;
    height: 8px;
}

.views svg {
    width: 28px;
}

.status .zoom {
    display: flex;
    align-items: center;
    gap: 3px;
}

.zoom button {
    line-height: 8px;
    color: #888;
}

.zoom input {
    appearance: none;
    flex: 1;
    min-width: 0;
    height: 8px;
    margin-right: 2px;
    background: linear-gradient(#a5a7a9, #a5a7a9) center / 100% 1px no-repeat;
}

.zoom input::-webkit-slider-thumb {
    appearance: none;
    width: 6px;
    height: 6px;
    border: 1px solid #999;
    border-radius: 3px;
    background: #fff;
}
```
